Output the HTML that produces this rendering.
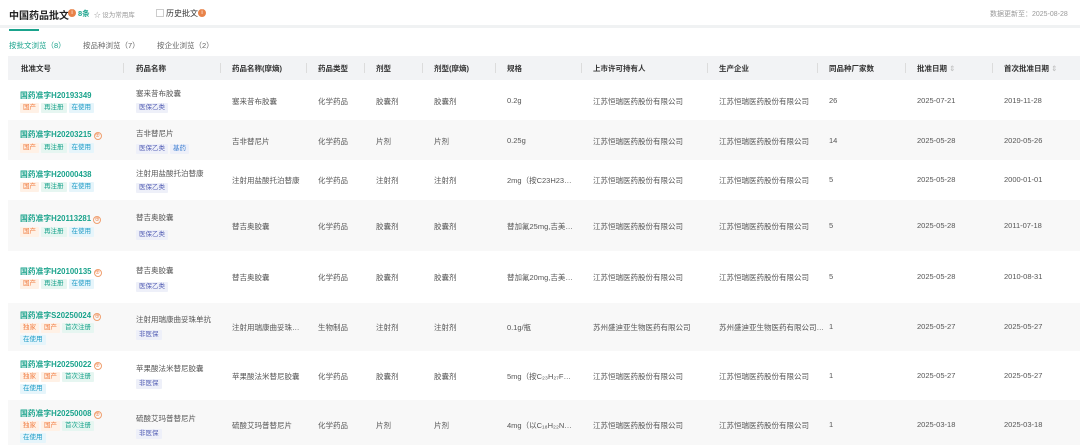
<!DOCTYPE html>
<html><head><meta charset="utf-8"><style>
*{margin:0;padding:0;box-sizing:border-box}
body{width:1080px;height:445px;background:#fff;font-family:"Liberation Sans","Noto Sans CJK SC",sans-serif;color:#555;font-size:8px;position:relative;overflow:hidden}
.a{position:absolute;white-space:nowrap}
.row{position:absolute;left:8px;width:1072px}
.c{position:absolute;white-space:nowrap;font-size:7.5px;color:#555}
.code{color:#1aa38c;font-size:7.8px;font-weight:bold}
.tag{display:inline-block;font-size:6.5px;line-height:10px;padding:0 3px;margin-right:2px;border-radius:1px;font-weight:normal}
.o{background:#fff1e6;color:#f07b3f}
.t{background:#e6f6f1;color:#1aa38c}
.b{background:#e6f5fb;color:#1d9bc6}
.p{background:#eef0f9;color:#5560b5}
.q{display:inline-block;width:8px;height:8px;border:1px solid #f0a070;border-radius:50%;color:#f07b3f;font-size:5px;line-height:6px;text-align:center;vertical-align:0;margin-left:2px;font-weight:normal}
.hd{position:absolute;top:56px;left:8px;width:1072px;height:24px;background:#f2f3f5}
.hd span{position:absolute;top:7px;font-size:7.5px;font-weight:bold;color:#333}
.sep{position:absolute;top:7px;width:1px;height:10px;background:#dcdcdc}
</style></head><body>
<div class="a" style="left:9px;top:7px;font-size:10px;font-weight:bold;color:#222">中国药品批文</div>
<div class="a" style="left:68px;top:9px;width:8px;height:8px;border-radius:50%;background:#e8834a;color:#fff;font-size:6px;text-align:center;line-height:8px">i</div>
<div class="a" style="left:78px;top:8px;font-size:7.5px;color:#1aa38c;font-weight:bold">8条</div>
<div class="a" style="left:94px;top:9px;font-size:6.5px;color:#999">☆ 设为常用库</div>
<div class="a" style="left:156px;top:9px;width:8px;height:8px;border:1px solid #ccc"></div>
<div class="a" style="left:166px;top:8px;font-size:8px;color:#333">历史批文</div>
<div class="a" style="left:198px;top:9px;width:8px;height:8px;border-radius:50%;background:#e8834a;color:#fff;font-size:6px;text-align:center;line-height:8px">i</div>
<div class="a" style="left:990px;top:9px;font-size:7px;color:#999">数据更新至：2025-08-28</div>
<div class="a" style="left:0;top:25px;width:1080px;height:3px;background:#f0f2f3"></div>
<div class="a" style="left:9px;top:29px;width:30px;height:2px;background:#1aa38c"></div>
<div class="a" style="left:9px;top:40px;font-size:7.5px;color:#1aa38c">按批文浏览（8）</div>
<div class="a" style="left:83px;top:40px;font-size:7.5px;color:#666">按品种浏览（7）</div>
<div class="a" style="left:157px;top:40px;font-size:7.5px;color:#666">按企业浏览（2）</div>
<div class="hd">
<span style="left:13px">批准文号</span><div class="sep" style="left:115px"></div>
<span style="left:128px">药品名称</span><div class="sep" style="left:212px"></div>
<span style="left:224px">药品名称(摩熵)</span><div class="sep" style="left:298px"></div>
<span style="left:310px">药品类型</span><div class="sep" style="left:356px"></div>
<span style="left:368px">剂型</span><div class="sep" style="left:414px"></div>
<span style="left:426px">剂型(摩熵)</span><div class="sep" style="left:487px"></div>
<span style="left:499px">规格</span><div class="sep" style="left:573px"></div>
<span style="left:585px">上市许可持有人</span><div class="sep" style="left:699px"></div>
<span style="left:711px">生产企业</span><div class="sep" style="left:809px"></div>
<span style="left:821px">同品种厂家数</span><div class="sep" style="left:897px"></div>
<span style="left:909px">批准日期 <b style="color:#bbb;font-weight:normal">⇕</b></span><div class="sep" style="left:984px"></div>
<span style="left:996px">首次批准日期 <b style="color:#bbb;font-weight:normal">⇕</b></span>
</div>

<div class="row" style="top:80px;height:40px;background:#fff">
<div class="c code" style="left:12px;top:10px">国药准字H20193349</div>
<div class="c" style="left:12px;top:22px"><span class="tag o">国产</span><span class="tag t">再注册</span><span class="tag b">在使用</span></div>
<div class="c" style="left:128px;top:8px">塞来昔布胶囊</div>
<div class="c" style="left:128px;top:22px"><span class="tag p">医保乙类</span></div>
<div class="c" style="left:224px;top:16px">塞来昔布胶囊</div><div class="c" style="left:310px;top:16px">化学药品</div><div class="c" style="left:368px;top:16px">胶囊剂</div><div class="c" style="left:426px;top:16px">胶囊剂</div><div class="c" style="left:499px;top:16px">0.2g</div><div class="c" style="left:585px;top:16px">江苏恒瑞医药股份有限公司</div><div class="c" style="left:711px;top:16px">江苏恒瑞医药股份有限公司</div><div class="c" style="left:821px;top:16px">26</div><div class="c" style="left:909px;top:16px">2025-07-21</div><div class="c" style="left:996px;top:16px">2019-11-28</div>
</div>
<div class="row" style="top:120px;height:40px;background:#f8f8f8">
<div class="c code" style="left:12px;top:9px">国药准字H20203215<span class="q">⊕</span></div>
<div class="c" style="left:12px;top:22px"><span class="tag o">国产</span><span class="tag t">再注册</span><span class="tag b">在使用</span></div>
<div class="c" style="left:128px;top:8px">吉非替尼片</div>
<div class="c" style="left:128px;top:23px"><span class="tag p">医保乙类</span><span class="tag p" style="color:#3c7fd0">基药</span></div>
<div class="c" style="left:224px;top:16px">吉非替尼片</div><div class="c" style="left:310px;top:16px">化学药品</div><div class="c" style="left:368px;top:16px">片剂</div><div class="c" style="left:426px;top:16px">片剂</div><div class="c" style="left:499px;top:16px">0.25g</div><div class="c" style="left:585px;top:16px">江苏恒瑞医药股份有限公司</div><div class="c" style="left:711px;top:16px">江苏恒瑞医药股份有限公司</div><div class="c" style="left:821px;top:16px">14</div><div class="c" style="left:909px;top:16px">2025-05-28</div><div class="c" style="left:996px;top:16px">2020-05-26</div>
</div>
<div class="row" style="top:160px;height:40px;background:#fff">
<div class="c code" style="left:12px;top:9px">国药准字H20000438</div>
<div class="c" style="left:12px;top:21px"><span class="tag o">国产</span><span class="tag t">再注册</span><span class="tag b">在使用</span></div>
<div class="c" style="left:128px;top:8px">注射用盐酸托泊替康</div>
<div class="c" style="left:128px;top:22px"><span class="tag p">医保乙类</span></div>
<div class="c" style="left:224px;top:15px">注射用盐酸托泊替康</div><div class="c" style="left:310px;top:15px">化学药品</div><div class="c" style="left:368px;top:15px">注射剂</div><div class="c" style="left:426px;top:15px">注射剂</div><div class="c" style="left:499px;top:15px">2mg（按C23H23…</div><div class="c" style="left:585px;top:15px">江苏恒瑞医药股份有限公司</div><div class="c" style="left:711px;top:15px">江苏恒瑞医药股份有限公司</div><div class="c" style="left:821px;top:15px">5</div><div class="c" style="left:909px;top:15px">2025-05-28</div><div class="c" style="left:996px;top:15px">2000-01-01</div>
</div>
<div class="row" style="top:200px;height:51px;background:#f8f8f8">
<div class="c code" style="left:12px;top:13px">国药准字H20113281<span class="q">⊕</span></div>
<div class="c" style="left:12px;top:26px"><span class="tag o">国产</span><span class="tag t">再注册</span><span class="tag b">在使用</span></div>
<div class="c" style="left:128px;top:12px">替吉奥胶囊</div>
<div class="c" style="left:128px;top:29px"><span class="tag p">医保乙类</span></div>
<div class="c" style="left:224px;top:21px">替吉奥胶囊</div><div class="c" style="left:310px;top:21px">化学药品</div><div class="c" style="left:368px;top:21px">胶囊剂</div><div class="c" style="left:426px;top:21px">胶囊剂</div><div class="c" style="left:499px;top:21px">替加氟25mg,吉美…</div><div class="c" style="left:585px;top:21px">江苏恒瑞医药股份有限公司</div><div class="c" style="left:711px;top:21px">江苏恒瑞医药股份有限公司</div><div class="c" style="left:821px;top:21px">5</div><div class="c" style="left:909px;top:21px">2025-05-28</div><div class="c" style="left:996px;top:21px">2011-07-18</div>
</div>
<div class="row" style="top:251px;height:52px;background:#fff">
<div class="c code" style="left:12px;top:15px">国药准字H20100135<span class="q">⊕</span></div>
<div class="c" style="left:12px;top:27px"><span class="tag o">国产</span><span class="tag t">再注册</span><span class="tag b">在使用</span></div>
<div class="c" style="left:128px;top:14px">替吉奥胶囊</div>
<div class="c" style="left:128px;top:30px"><span class="tag p">医保乙类</span></div>
<div class="c" style="left:224px;top:21px">替吉奥胶囊</div><div class="c" style="left:310px;top:21px">化学药品</div><div class="c" style="left:368px;top:21px">胶囊剂</div><div class="c" style="left:426px;top:21px">胶囊剂</div><div class="c" style="left:499px;top:21px">替加氟20mg,吉美…</div><div class="c" style="left:585px;top:21px">江苏恒瑞医药股份有限公司</div><div class="c" style="left:711px;top:21px">江苏恒瑞医药股份有限公司</div><div class="c" style="left:821px;top:21px">5</div><div class="c" style="left:909px;top:21px">2025-05-28</div><div class="c" style="left:996px;top:21px">2010-08-31</div>
</div>
<div class="row" style="top:303px;height:48px;background:#f8f8f8">
<div class="c code" style="left:12px;top:7px">国药准字S20250024<span class="q">⊕</span></div>
<div class="c" style="left:12px;top:19px"><span class="tag o">独家</span><span class="tag o">国产</span><span class="tag t">首次注册</span></div>
<div class="c" style="left:12px;top:31px"><span class="tag b">在使用</span></div>
<div class="c" style="left:128px;top:11px">注射用瑞康曲妥珠单抗</div>
<div class="c" style="left:128px;top:26px"><span class="tag p">非医保</span></div>
<div class="c" style="left:224px;top:19px">注射用瑞康曲妥珠…</div><div class="c" style="left:310px;top:19px">生物制品</div><div class="c" style="left:368px;top:19px">注射剂</div><div class="c" style="left:426px;top:19px">注射剂</div><div class="c" style="left:499px;top:19px">0.1g/瓶</div><div class="c" style="left:585px;top:19px">苏州盛迪亚生物医药有限公司</div><div class="c" style="left:711px;top:19px">苏州盛迪亚生物医药有限公司…</div><div class="c" style="left:821px;top:19px">1</div><div class="c" style="left:909px;top:19px">2025-05-27</div><div class="c" style="left:996px;top:19px">2025-05-27</div>
</div>
<div class="row" style="top:351px;height:49px;background:#fff">
<div class="c code" style="left:12px;top:8px">国药准字H20250022<span class="q">⊕</span></div>
<div class="c" style="left:12px;top:20px"><span class="tag o">独家</span><span class="tag o">国产</span><span class="tag t">首次注册</span></div>
<div class="c" style="left:12px;top:32px"><span class="tag b">在使用</span></div>
<div class="c" style="left:128px;top:12px">苹果酸法米替尼胶囊</div>
<div class="c" style="left:128px;top:27px"><span class="tag p">非医保</span></div>
<div class="c" style="left:224px;top:20px">苹果酸法米替尼胶囊</div><div class="c" style="left:310px;top:20px">化学药品</div><div class="c" style="left:368px;top:20px">胶囊剂</div><div class="c" style="left:426px;top:20px">胶囊剂</div><div class="c" style="left:499px;top:20px">5mg（按C₂₃H₂₇F…</div><div class="c" style="left:585px;top:20px">江苏恒瑞医药股份有限公司</div><div class="c" style="left:711px;top:20px">江苏恒瑞医药股份有限公司</div><div class="c" style="left:821px;top:20px">1</div><div class="c" style="left:909px;top:20px">2025-05-27</div><div class="c" style="left:996px;top:20px">2025-05-27</div>
</div>
<div class="row" style="top:400px;height:45px;background:#f8f8f8">
<div class="c code" style="left:12px;top:8px">国药准字H20250008<span class="q">⊕</span></div>
<div class="c" style="left:12px;top:20px"><span class="tag o">独家</span><span class="tag o">国产</span><span class="tag t">首次注册</span></div>
<div class="c" style="left:12px;top:32px"><span class="tag b">在使用</span></div>
<div class="c" style="left:128px;top:13px">硫酸艾玛普替尼片</div>
<div class="c" style="left:128px;top:28px"><span class="tag p">非医保</span></div>
<div class="c" style="left:224px;top:20px">硫酸艾玛普替尼片</div><div class="c" style="left:310px;top:20px">化学药品</div><div class="c" style="left:368px;top:20px">片剂</div><div class="c" style="left:426px;top:20px">片剂</div><div class="c" style="left:499px;top:20px">4mg（以C₁₈H₂₂N…</div><div class="c" style="left:585px;top:20px">江苏恒瑞医药股份有限公司</div><div class="c" style="left:711px;top:20px">江苏恒瑞医药股份有限公司</div><div class="c" style="left:821px;top:20px">1</div><div class="c" style="left:909px;top:20px">2025-03-18</div><div class="c" style="left:996px;top:20px">2025-03-18</div>
</div>
</body></html>
